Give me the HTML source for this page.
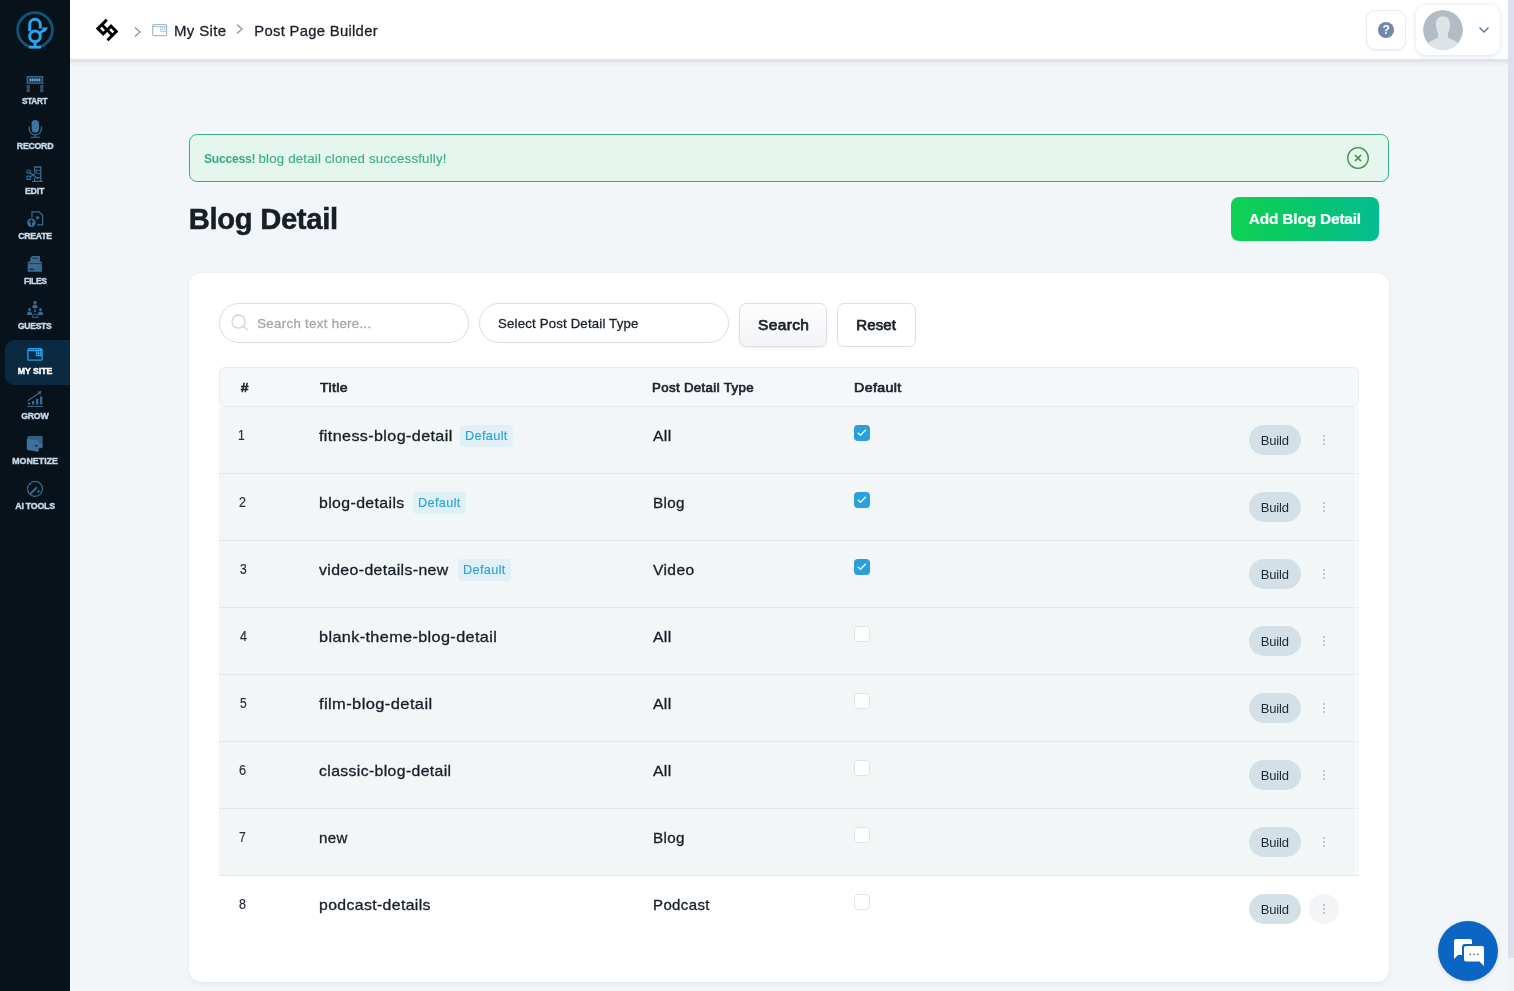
<!DOCTYPE html>
<html lang="en">
<head>
<meta charset="utf-8">
<title>Post Page Builder</title>
<style>
*{box-sizing:border-box;margin:0;padding:0}
html,body{width:1514px;height:991px;overflow:hidden}
body{position:relative;background:#f2f6f9;font-family:"Liberation Sans",sans-serif;color:#141c24}
#wrap{position:absolute;left:0;top:0;width:1514px;height:991px;will-change:transform}
.t{position:absolute;white-space:nowrap;line-height:1;transform-origin:0 0}
svg{display:block;overflow:visible}
/* sidebar */
#side{position:absolute;left:0;top:0;width:70px;height:991px;background:#07121b}
.nav{position:absolute;left:0;width:70px;height:45px}
.nav svg{position:absolute;left:25px;top:4px;width:20px;height:20px}
.navbg{position:absolute;left:5px;width:65px;height:45px;margin-top:30px;background:#0b2a42;border-radius:9px 0 0 9px}
/* topbar */
#top{position:absolute;left:70px;top:0;width:1444px;height:59px;background:linear-gradient(#fff 0,#fff 57px,#fcfdfe 57px,#fcfdfe 59px)}
#topsh{position:absolute;left:70px;top:59px;width:1444px;height:8px;background:linear-gradient(#dfe4e8 0,#dfe4e8 2px,#e5e9ed 3px,#eaeef1 4px,#edf1f4 5px,#eff3f6 6px,#f1f5f8 7px,#f2f6f9 8px)}
#top .in{position:absolute;left:-70px;top:0;width:1514px;height:58px}
/* scrollbar */
#sbt{position:absolute;left:1508px;top:0;width:6px;height:991px;background:#f0f2f8}
#sb{position:absolute;left:1508px;top:0;width:6px;height:958px;background:#dcdfee}
/* alert */
#alert{position:absolute;left:189px;top:134px;width:1200px;height:48px;border:1px solid #3aae8a;border-radius:8px;background:#e5f6ef}
#addbtn{position:absolute;left:1231px;top:197px;width:148px;height:44px;border-radius:8px;background:linear-gradient(90deg,#0fd252 0%,#08c66c 50%,#05bc92 100%)}
#card{position:absolute;left:189px;top:273px;width:1200px;height:709px;background:#fff;border-radius:12px;box-shadow:0 2px 4px rgba(90,100,115,.09),0 0 2px rgba(90,100,115,.08)}
.pill{position:absolute;height:40px;border:1px solid #dadde1;border-radius:20px;background:#fff}
.btn{position:absolute;height:44px;border:1px solid #dcdfe3;border-radius:7px;background:#fff}
#thead{position:absolute;left:219px;top:367px;width:1140px;height:40px;border:1px solid #e6ebee;border-radius:6px;background:#f5f8fa}
.row{position:absolute;left:219px;width:1140px;height:67px;background:#f3f6f7;border-bottom:1px solid #e2e7ea}
.row.last{background:#fff;border-bottom:none}
.badge{position:absolute;width:53px;height:22px;border-radius:4px;background:#e0f0f7}
.cb{position:absolute;width:16px;height:16px;border-radius:4px}
.cb.on{background:#2a9fdb}
.cb.off{background:#fff;border:1px solid #dfe3e7}
.build{position:absolute;width:52px;height:30px;border-radius:15px;background:#d3e0e7}
.dotbg{position:absolute;width:30px;height:30px;border-radius:15px;background:#f3f4f5}
.dots{position:absolute;width:2px;height:10px}
.dots i{position:absolute;left:0;width:2px;height:2px;border-radius:1px;background:#b0b7be}
#strip{position:absolute;left:1353px;top:407px;width:6px;height:468px;background:rgba(255,255,255,.3);border-left:1px solid rgba(228,232,236,.45)}
</style>
</head>
<body>
<div id="wrap">
<div id="side">
<svg style="position:absolute;left:15px;top:10px;width:40px;height:40px" viewBox="0 0 40 40"><circle cx="20" cy="20" r="17.4" fill="none" stroke="#0f5577" stroke-width="2.8"/><path d="M14.7 21.3V14.5a5.3 5.3 0 0 1 10.6 0V18.4" fill="none" stroke="#2ba6ee" stroke-width="3"/><circle cx="20" cy="26.4" r="5.3" fill="none" stroke="#2ba6ee" stroke-width="3"/><path d="M24.6 23.4L30.8 18.6" fill="none" stroke="#2ba6ee" stroke-width="2.8"/><path d="M26.8 17.4h6.2l-3.2 4.8z" fill="#2ba6ee"/><path d="M20 31.5V37" stroke="#2ba6ee" stroke-width="2.8" fill="none"/><path d="M13.9 37.2H26" stroke="#2ba6ee" stroke-width="2.6" fill="none"/></svg>
<div class="nav" style="top:70px"><svg viewBox="0 0 20 20"><rect x="2.3" y="2.6" width="15.4" height="6.6" fill="#15364d" stroke="#3a6a8d" stroke-width="1.2"/><rect x="4.6" y="4.6" width="10.8" height="2.6" fill="#86abc6"/><path d="M6.6 4.4v3M8.8 4.4v3M11.1 4.4v3M13.3 4.4v3" stroke="#15364d" stroke-width=".7"/><rect x="1.7" y="11.2" width="3.1" height="6.7" fill="#3a6a8d"/><rect x="15.2" y="11.2" width="3.1" height="6.7" fill="#3a6a8d"/><path d="M1.5 12.9h17M1.5 14.6h17M1.5 16.3h17" stroke="#07121b" stroke-width=".5"/></svg></div>
<span class="t" style="left:21.95px;top:96.95px;font-size:8.8px;color:#c5d8e8;font-weight:700;letter-spacing:-0.30px;transform:scaleX(0.9323);-webkit-text-stroke:0.4px #c5d8e8;">START</span>
<div class="nav" style="top:115px"><svg viewBox="0 0 20 20"><rect x="6.6" y="1" width="7.4" height="12.6" rx="3.7" fill="#3b76a3"/><path d="M4.2 7.6v2.2a6.1 6.1 0 0 0 12.2 0V7.6" fill="none" stroke="#3a6a8d" stroke-width="1.3"/><path d="M10.3 16v2.2" stroke="#3a6a8d" stroke-width="1.3" fill="none"/><path d="M5.6 18.3h9.4" stroke="#3a6a8d" stroke-width="1.1" fill="none"/></svg></div>
<span class="t" style="left:16.83px;top:141.95px;font-size:8.8px;color:#c5d8e8;font-weight:700;letter-spacing:-0.28px;-webkit-text-stroke:0.4px #c5d8e8;">RECORD</span>
<div class="nav" style="top:160px"><svg viewBox="0 0 20 20"><path d="M8.8 3h7v14.4" fill="none" stroke="#3a6a8d" stroke-width="1.3"/><path d="M9.6 3v5M9.6 14v3.4h6.2M7 17.4h10.8" fill="none" stroke="#3a6a8d" stroke-width="1.2"/><path d="M10 6.2h5.5M12 9.8h3.8M10 13.6h5.8" stroke="#3a6a8d" stroke-width="1"/><circle cx="3.7" cy="7.7" r="1.7" fill="none" stroke="#3a6a8d" stroke-width="1.2"/><rect x="2.1" y="12.2" width="3.2" height="3.2" fill="none" stroke="#3a6a8d" stroke-width="1.2"/><path d="M5 8.8l8.5 6.2M5.3 13l7-5.5" stroke="#3a6a8d" stroke-width="1.2"/></svg></div>
<span class="t" style="left:24.93px;top:186.95px;font-size:8.8px;color:#c5d8e8;font-weight:700;letter-spacing:-0.19px;-webkit-text-stroke:0.4px #c5d8e8;">EDIT</span>
<div class="nav" style="top:205px"><svg viewBox="0 0 20 20"><path d="M7 8.5V2.9h7.2l3.4 3.4v9.5h-5.5" fill="none" stroke="#3a6a8d" stroke-width="1.3"/><path d="M11.4 6.6l3.8 2.2-3.8 2.2z" fill="#3a6a8d"/><circle cx="6.4" cy="13.7" r="4.2" fill="#3b6f98"/><path d="M6.4 16.4v-4.8M4.5 13.3l1.9-2 1.9 2" stroke="#07121b" stroke-width="1.2" fill="none"/></svg></div>
<span class="t" style="left:18.15px;top:231.95px;font-size:8.8px;color:#c5d8e8;font-weight:700;letter-spacing:-0.29px;-webkit-text-stroke:0.4px #c5d8e8;">CREATE</span>
<div class="nav" style="top:250px"><svg viewBox="0 0 20 20"><path d="M5.2 4l2-2.1h7.8V9H5.2z" fill="#3a6a8d"/><path d="M6.8 4.2h6.6" stroke="#07121b" stroke-width=".8" opacity=".7"/><rect x="2.7" y="7.5" width="14.2" height="10.3" fill="#3a6b8e"/><path d="M2.7 9.6h14.2" stroke="#07121b" stroke-width=".8" opacity=".6"/><rect x="4.5" y="14.7" width="4.2" height="1.4" fill="#07121b" opacity=".75"/></svg></div>
<span class="t" style="left:23.65px;top:276.95px;font-size:8.8px;color:#c5d8e8;font-weight:700;letter-spacing:-0.30px;transform:scaleX(0.9683);-webkit-text-stroke:0.4px #c5d8e8;">FILES</span>
<div class="nav" style="top:295px"><svg viewBox="0 0 20 20"><circle cx="10" cy="3.4" r="1.7" fill="#3a6a8d"/><path d="M7.3 8.9c0-2.3 1.1-3.4 2.7-3.4s2.7 1.1 2.7 3.4z" fill="#3a6a8d"/><circle cx="4.5" cy="10.6" r="1.5" fill="#3a6a8d"/><path d="M1.8 16c0-2.3 1.1-3.4 2.7-3.4s2.7 1.1 2.7 3.4z" fill="#3a6a8d"/><circle cx="15.5" cy="10.6" r="1.5" fill="#3a6a8d"/><path d="M12.8 16c0-2.3 1.1-3.4 2.7-3.4s2.7 1.1 2.7 3.4z" fill="#3a6a8d"/><circle cx="10" cy="12.3" r="1.1" fill="#3a6a8d"/><path d="M7.3 18.3c0-2.2 1.1-3.2 2.7-3.2s2.7 1 2.7 3.2z" fill="none" stroke="#3a6a8d" stroke-width="1"/><path d="M10 9v2" stroke="#3a6a8d" stroke-width=".9"/></svg></div>
<span class="t" style="left:18.16px;top:321.95px;font-size:8.8px;color:#c5d8e8;font-weight:700;letter-spacing:-0.30px;transform:scaleX(0.9733);-webkit-text-stroke:0.4px #c5d8e8;">GUESTS</span>
<div class="navbg" style="top:310.2px"></div>
<div class="nav" style="top:340px"><svg viewBox="0 0 20 20"><rect x="2.9" y="4.7" width="14.2" height="11.4" rx="1.2" fill="none" stroke="#1f9be8" stroke-width="1.4"/><path d="M2.9 6.7h8.5v5h5.7" stroke="#1f9be8" stroke-width="1.2" fill="none"/><path d="M11.4 6.6h5.7M11.4 9.1h5.7M13.3 4.7v7M15.3 4.7v7" stroke="#3ab4f2" stroke-width=".9" fill="none"/><path d="M4.8 4.2v1.8M6.6 4.2v1.8M8.4 4.2v1.8M10.2 4.2v1.8" stroke="#1f9be8" stroke-width=".8"/></svg></div>
<span class="t" style="left:17.73px;top:366.95px;font-size:8.8px;color:#ffffff;font-weight:700;letter-spacing:-0.07px;-webkit-text-stroke:0.4px #ffffff;">MY SITE</span>
<div class="nav" style="top:385px"><svg viewBox="0 0 20 20"><rect x="3" y="13.6" width="2.3" height="1.9" fill="#3a6a8d"/><rect x="7" y="12" width="2.3" height="3.5" fill="#3a6a8d"/><rect x="11" y="9.8" width="2.3" height="5.7" fill="#3a6a8d"/><rect x="15" y="7.4" width="2.3" height="8.1" fill="#3a6a8d"/><path d="M2.3 17.4h15.6" stroke="#3a6a8d" stroke-width="1.1"/><path d="M2.7 11.8L15 3.5" stroke="#3a6a8d" stroke-width="1.1"/><path d="M12.6 2.6l4-.5-1.4 3.8z" fill="#3a6a8d"/></svg></div>
<span class="t" style="left:21.15px;top:411.95px;font-size:8.8px;color:#c5d8e8;font-weight:700;letter-spacing:-0.24px;-webkit-text-stroke:0.4px #c5d8e8;">GROW</span>
<div class="nav" style="top:430px"><svg viewBox="0 0 20 20"><path d="M2.6 3.2c0-.7.5-1.2 1.2-1.2h12.7c.7 0 1.2.5 1.2 1.2V13c0 .7-.5 1.2-1.2 1.2H2.6z" fill="#335f80"/><path d="M1.8 4.6l10.6 2c.8.2 1.3.8 1.3 1.6v8.4c0 .8-.7 1.4-1.5 1.2L3 16c-.7-.2-1.2-.8-1.2-1.5z" fill="#3d719a"/><path d="M13.7 9.3h3.2v4.2h-3.2" fill="#3d719a"/><circle cx="11.3" cy="11.7" r="1" fill="#07121b"/></svg></div>
<span class="t" style="left:12.13px;top:456.95px;font-size:8.8px;color:#c5d8e8;font-weight:700;letter-spacing:0.05px;-webkit-text-stroke:0.4px #c5d8e8;">MONETIZE</span>
<div class="nav" style="top:475px"><svg viewBox="0 0 20 20"><circle cx="10" cy="9.8" r="7.5" fill="none" stroke="#3a6a8d" stroke-width="1.2"/><path d="M5 1.4l.9 2.7 2.7.9-2.7.9L5 8.6l-.9-2.7-2.7-.9 2.7-.9z" fill="#3a6a8d" stroke="#07121b" stroke-width="1"/><path d="M6 14.2l5.3-5.3" stroke="#3a6a8d" stroke-width="2" stroke-linecap="round"/><path d="M13.6 10.3l.6 1.5 1.5.6-1.5.6-.6 1.5-.6-1.5-1.5-.6 1.5-.6z" fill="#3a6a8d"/></svg></div>
<span class="t" style="left:15.28px;top:501.95px;font-size:8.8px;color:#c5d8e8;font-weight:700;letter-spacing:-0.22px;-webkit-text-stroke:0.4px #c5d8e8;">AI TOOLS</span>
</div>
<div id="topsh"></div>
<div id="top"><div class="in">
<svg style="position:absolute;left:95px;top:18px;width:24px;height:24px" viewBox="-12 -12 24 24"><g transform="translate(0.1,0) rotate(-45)" fill="#000"><path fill-rule="evenodd" d="M-7 -9H7V-6H1.5V-1.5H7V9H-7V6H-1.5V1.5H-7ZM-4 -6V-1.5H-1.5V-6ZM1.5 1.5V6H4V1.5Z"/></g></svg>
<svg style="position:absolute;left:133px;top:26px;width:9px;height:12px" viewBox="0 0 9 12"><path d="M2 1.5L7 6 2 10.5" fill="none" stroke="#9b9b9b" stroke-width="1.5"/></svg>
<svg style="position:absolute;left:152.3px;top:24px;width:15.3px;height:12.4px" viewBox="0 0 16 13"><rect x=".7" y=".7" width="14.6" height="11.6" rx="1.2" fill="#fff" stroke="#a9bccb" stroke-width="1.3"/><path d="M.7 2.8h14.6" stroke="#a9bccb" stroke-width="1"/><path d="M9 2.8v5h6.3" stroke="#a8cdea" stroke-width="1" fill="none"/><path d="M11.2 2.8v5M13.3 2.8v5M9 5.3h6.3" stroke="#b9d8ef" stroke-width=".9" fill="none"/></svg>
<span class="t" style="left:174.10px;top:23.57px;font-size:14.8px;color:#1a222b;letter-spacing:0.35px;transform:scaleX(1.0139);-webkit-text-stroke:0.3px #1a222b;">My Site</span>
<svg style="position:absolute;left:235px;top:22.5px;width:9px;height:12px" viewBox="0 0 9 12"><path d="M2 1.5L7 6 2 10.5" fill="none" stroke="#9b9b9b" stroke-width="1.5"/></svg>
<span class="t" style="left:254.22px;top:23.57px;font-size:14.8px;color:#1a222b;letter-spacing:0.31px;-webkit-text-stroke:0.3px #1a222b;">Post Page Builder</span>
<div style="position:absolute;left:1366px;top:10px;width:40px;height:40px;border:1px solid #e7eaef;border-radius:9px;background:#fff;box-shadow:0 1px 2px rgba(150,160,175,.15)"></div><div style="position:absolute;left:1378px;top:22px;width:16px;height:16px;border-radius:8px;background:#7188a8"></div><span class="t" style="left:1382.6px;top:24.3px;font-size:12px;font-weight:700;color:#fff">?</span>
<div style="position:absolute;left:1416px;top:5px;width:84px;height:50px;border-radius:10px;background:#fff;box-shadow:0 1px 5px rgba(140,150,170,.30)"></div><svg style="position:absolute;left:1423px;top:10px;width:40px;height:40px;border-radius:20px;overflow:hidden" viewBox="0 0 40 40"><circle cx="20" cy="20" r="20" fill="#b3bbc4"/><g fill="#dde3e7"><path d="M13 14.5c0-5.5 2.8-8 7-8s7 2.5 7 8c0 3-.5 6-2 8.5v4.5l9 4.5v8H6v-8l9-4.5v-4.5c-1.5-2.5-2-5.5-2-8.5z"/></g></svg><svg style="position:absolute;left:1478px;top:26px;width:12px;height:8px" viewBox="0 0 12 8"><path d="M1.5 1.5L6 6l4.5-4.5" fill="none" stroke="#5f7c94" stroke-width="1.5"/></svg>
</div></div>
<div id="alert"></div>
<span class="t" style="left:204.44px;top:152.33px;font-size:13.2px;color:#35ab82;font-weight:700;letter-spacing:-0.30px;transform:scaleX(0.9214);">Success!</span>
<span class="t" style="left:258.54px;top:152.33px;font-size:13.2px;color:#3cae86;letter-spacing:0.22px;-webkit-text-stroke:0.15px #3cae86;">blog detail cloned successfully!</span>
<svg style="position:absolute;left:1346px;top:146px;width:24px;height:24px" viewBox="0 0 24 24"><circle cx="12" cy="12" r="10.3" fill="none" stroke="#3f8f45" stroke-width="1.3"/><path d="M9 9l6 6M15 9l-6 6" stroke="#3f8f45" stroke-width="1.7"/></svg>
<span class="t" style="left:188.70px;top:205.28px;font-size:29.2px;color:#171e26;font-weight:700;letter-spacing:-0.30px;-webkit-text-stroke:0.5px #171e26;">Blog Detail</span>
<div id="addbtn"></div>
<span class="t" style="left:1248.82px;top:210.96px;font-size:15.4px;color:#ffffff;font-weight:700;letter-spacing:-0.16px;-webkit-text-stroke:0.2px #ffffff;">Add Blog Detail</span>
<div id="card"></div>
<div class="pill" style="left:219px;top:303px;width:250px"></div>
<svg style="position:absolute;left:231px;top:314.2px;width:18px;height:17px" viewBox="0 0 18 17"><circle cx="7.6" cy="7.6" r="6.6" fill="none" stroke="#d0d3d7" stroke-width="1.3"/><path d="M12.3 12.3l4.4 3.8" stroke="#d0d3d7" stroke-width="1.4"/></svg>
<span class="t" style="left:257.20px;top:316.93px;font-size:13.2px;color:#a2a7ac;letter-spacing:0.35px;-webkit-text-stroke:0.3px #a2a7ac;">Search text here...</span>
<div class="pill" style="left:479px;top:303px;width:250px"></div>
<span class="t" style="left:498.01px;top:317.03px;font-size:13.2px;color:#1a222b;letter-spacing:0.19px;-webkit-text-stroke:0.3px #1a222b;">Select Post Detail Type</span>
<div class="btn" style="left:739px;top:303px;width:88px;background:linear-gradient(#fdfdfe,#f2f4f6);box-shadow:0 1px 2px rgba(120,130,140,.14)"></div>
<span class="t" style="left:757.90px;top:317.20px;font-size:15px;color:#1a222b;letter-spacing:0.35px;transform:scaleX(1.0321);-webkit-text-stroke:0.75px #1a222b;">Search</span>
<div class="btn" style="left:837px;top:303px;width:79px"></div>
<span class="t" style="left:856.30px;top:317.20px;font-size:15px;color:#1a222b;letter-spacing:0.13px;-webkit-text-stroke:0.75px #1a222b;">Reset</span>
<div id="thead"></div>
<span class="t" style="left:240.99px;top:380.73px;font-size:13.2px;color:#1a222b;-webkit-text-stroke:0.68px #1a222b;">#</span>
<span class="t" style="left:320.32px;top:380.73px;font-size:13.2px;color:#1a222b;letter-spacing:0.35px;transform:scaleX(1.0616);-webkit-text-stroke:0.68px #1a222b;">Title</span>
<span class="t" style="left:652.24px;top:380.73px;font-size:13.2px;color:#1a222b;letter-spacing:0.35px;transform:scaleX(1.0047);-webkit-text-stroke:0.68px #1a222b;">Post Detail Type</span>
<span class="t" style="left:853.76px;top:380.73px;font-size:13.2px;color:#1a222b;letter-spacing:0.35px;transform:scaleX(1.0782);-webkit-text-stroke:0.68px #1a222b;">Default</span>
<div class="row" style="top:407px"></div>
<span class="t" style="left:237.92px;top:427.88px;font-size:14.2px;color:#27313b;transform:scaleX(0.8500);-webkit-text-stroke:0.2px #27313b;">1</span>
<span class="t" style="left:319.16px;top:428.63px;font-size:14.5px;color:#161e27;letter-spacing:0.35px;transform:scaleX(1.1108);-webkit-text-stroke:0.3px #161e27;">fitness-blog-detail</span>
<div class="badge" style="left:460.4px;top:425.4px"></div>
<span class="t" style="left:465.38px;top:430.33px;font-size:12.6px;color:#2ba2d6;letter-spacing:0.35px;transform:scaleX(1.0096);-webkit-text-stroke:0.15px #2ba2d6;">Default</span>
<div class="cb on" style="left:854px;top:425.0px"><svg style="position:absolute;left:0;top:0;width:16px;height:16px" viewBox="0 0 16 16"><path d="M3.8 7.7l2.7 2.6 5.3-5.6" fill="none" stroke="#e4f7ff" stroke-width="1.5"/></svg></div>
<span class="t" style="left:653.00px;top:428.63px;font-size:14.5px;color:#161e27;letter-spacing:0.35px;transform:scaleX(1.0850);-webkit-text-stroke:0.3px #161e27;">All</span>
<div class="build" style="left:1249px;top:424.7px"></div>
<span class="t" style="left:1260.66px;top:434.20px;font-size:13px;color:#1f2a33;letter-spacing:-0.16px;">Build</span>
<div class="dots" style="left:1323px;top:435.2px"><i style="top:0"></i><i style="top:4px"></i><i style="top:8px"></i></div>
<div class="row" style="top:474px"></div>
<span class="t" style="left:239.37px;top:494.88px;font-size:14.2px;color:#27313b;transform:scaleX(0.8822);-webkit-text-stroke:0.2px #27313b;">2</span>
<span class="t" style="left:319.07px;top:495.63px;font-size:14.5px;color:#161e27;letter-spacing:0.35px;transform:scaleX(1.0932);-webkit-text-stroke:0.3px #161e27;">blog-details</span>
<div class="badge" style="left:412.9px;top:492.4px"></div>
<span class="t" style="left:417.88px;top:497.33px;font-size:12.6px;color:#2ba2d6;letter-spacing:0.35px;transform:scaleX(1.0096);-webkit-text-stroke:0.15px #2ba2d6;">Default</span>
<div class="cb on" style="left:854px;top:492.0px"><svg style="position:absolute;left:0;top:0;width:16px;height:16px" viewBox="0 0 16 16"><path d="M3.8 7.7l2.7 2.6 5.3-5.6" fill="none" stroke="#e4f7ff" stroke-width="1.5"/></svg></div>
<span class="t" style="left:652.78px;top:495.63px;font-size:14.5px;color:#161e27;letter-spacing:0.35px;transform:scaleX(1.0484);-webkit-text-stroke:0.3px #161e27;">Blog</span>
<div class="build" style="left:1249px;top:491.7px"></div>
<span class="t" style="left:1260.66px;top:501.20px;font-size:13px;color:#1f2a33;letter-spacing:-0.16px;">Build</span>
<div class="dots" style="left:1323px;top:502.2px"><i style="top:0"></i><i style="top:4px"></i><i style="top:8px"></i></div>
<div class="row" style="top:541px"></div>
<span class="t" style="left:239.50px;top:561.88px;font-size:14.2px;color:#27313b;transform:scaleX(0.8500);-webkit-text-stroke:0.2px #27313b;">3</span>
<span class="t" style="left:319.32px;top:562.63px;font-size:14.5px;color:#161e27;letter-spacing:0.35px;transform:scaleX(1.0911);-webkit-text-stroke:0.3px #161e27;">video-details-new</span>
<div class="badge" style="left:457.7px;top:559.4px"></div>
<span class="t" style="left:462.68px;top:564.33px;font-size:12.6px;color:#2ba2d6;letter-spacing:0.35px;transform:scaleX(1.0096);-webkit-text-stroke:0.15px #2ba2d6;">Default</span>
<div class="cb on" style="left:854px;top:559.0px"><svg style="position:absolute;left:0;top:0;width:16px;height:16px" viewBox="0 0 16 16"><path d="M3.8 7.7l2.7 2.6 5.3-5.6" fill="none" stroke="#e4f7ff" stroke-width="1.5"/></svg></div>
<span class="t" style="left:652.92px;top:562.63px;font-size:14.5px;color:#161e27;letter-spacing:0.35px;transform:scaleX(1.0751);-webkit-text-stroke:0.3px #161e27;">Video</span>
<div class="build" style="left:1249px;top:558.7px"></div>
<span class="t" style="left:1260.66px;top:568.20px;font-size:13px;color:#1f2a33;letter-spacing:-0.16px;">Build</span>
<div class="dots" style="left:1323px;top:569.2px"><i style="top:0"></i><i style="top:4px"></i><i style="top:8px"></i></div>
<div class="row" style="top:608px"></div>
<span class="t" style="left:239.75px;top:628.88px;font-size:14.2px;color:#27313b;transform:scaleX(0.8785);-webkit-text-stroke:0.2px #27313b;">4</span>
<span class="t" style="left:319.05px;top:629.63px;font-size:14.5px;color:#161e27;letter-spacing:0.35px;transform:scaleX(1.1167);-webkit-text-stroke:0.3px #161e27;">blank-theme-blog-detail</span>
<div class="cb off" style="left:854px;top:626.0px"></div>
<span class="t" style="left:653.00px;top:629.63px;font-size:14.5px;color:#161e27;letter-spacing:0.35px;transform:scaleX(1.0850);-webkit-text-stroke:0.3px #161e27;">All</span>
<div class="build" style="left:1249px;top:625.7px"></div>
<span class="t" style="left:1260.66px;top:635.20px;font-size:13px;color:#1f2a33;letter-spacing:-0.16px;">Build</span>
<div class="dots" style="left:1323px;top:636.2px"><i style="top:0"></i><i style="top:4px"></i><i style="top:8px"></i></div>
<div class="row" style="top:675px"></div>
<span class="t" style="left:239.50px;top:695.88px;font-size:14.2px;color:#27313b;transform:scaleX(0.8500);-webkit-text-stroke:0.2px #27313b;">5</span>
<span class="t" style="left:319.15px;top:696.63px;font-size:14.5px;color:#161e27;letter-spacing:0.35px;transform:scaleX(1.1369);-webkit-text-stroke:0.3px #161e27;">film-blog-detail</span>
<div class="cb off" style="left:854px;top:693.0px"></div>
<span class="t" style="left:653.00px;top:696.63px;font-size:14.5px;color:#161e27;letter-spacing:0.35px;transform:scaleX(1.0850);-webkit-text-stroke:0.3px #161e27;">All</span>
<div class="build" style="left:1249px;top:692.7px"></div>
<span class="t" style="left:1260.66px;top:702.20px;font-size:13px;color:#1f2a33;letter-spacing:-0.16px;">Build</span>
<div class="dots" style="left:1323px;top:703.2px"><i style="top:0"></i><i style="top:4px"></i><i style="top:8px"></i></div>
<div class="row" style="top:742px"></div>
<span class="t" style="left:239.37px;top:762.88px;font-size:14.2px;color:#27313b;transform:scaleX(0.8935);-webkit-text-stroke:0.2px #27313b;">6</span>
<span class="t" style="left:319.07px;top:763.63px;font-size:14.5px;color:#161e27;letter-spacing:0.35px;transform:scaleX(1.0868);-webkit-text-stroke:0.3px #161e27;">classic-blog-detail</span>
<div class="cb off" style="left:854px;top:760.0px"></div>
<span class="t" style="left:653.00px;top:763.63px;font-size:14.5px;color:#161e27;letter-spacing:0.35px;transform:scaleX(1.0850);-webkit-text-stroke:0.3px #161e27;">All</span>
<div class="build" style="left:1249px;top:759.7px"></div>
<span class="t" style="left:1260.66px;top:769.20px;font-size:13px;color:#1f2a33;letter-spacing:-0.16px;">Build</span>
<div class="dots" style="left:1323px;top:770.2px"><i style="top:0"></i><i style="top:4px"></i><i style="top:8px"></i></div>
<div class="row" style="top:809px"></div>
<span class="t" style="left:239.40px;top:829.88px;font-size:14.2px;color:#27313b;transform:scaleX(0.8513);-webkit-text-stroke:0.2px #27313b;">7</span>
<span class="t" style="left:319.12px;top:830.63px;font-size:14.5px;color:#161e27;letter-spacing:0.35px;transform:scaleX(1.0393);-webkit-text-stroke:0.3px #161e27;">new</span>
<div class="cb off" style="left:854px;top:827.0px"></div>
<span class="t" style="left:652.78px;top:830.63px;font-size:14.5px;color:#161e27;letter-spacing:0.35px;transform:scaleX(1.0484);-webkit-text-stroke:0.3px #161e27;">Blog</span>
<div class="build" style="left:1249px;top:826.7px"></div>
<span class="t" style="left:1260.66px;top:836.20px;font-size:13px;color:#1f2a33;letter-spacing:-0.16px;">Build</span>
<div class="dots" style="left:1323px;top:837.2px"><i style="top:0"></i><i style="top:4px"></i><i style="top:8px"></i></div>
<div class="row last" style="top:876px"></div>
<span class="t" style="left:239.44px;top:896.88px;font-size:14.2px;color:#27313b;transform:scaleX(0.8840);-webkit-text-stroke:0.2px #27313b;">8</span>
<span class="t" style="left:319.07px;top:897.63px;font-size:14.5px;color:#161e27;letter-spacing:0.35px;transform:scaleX(1.0885);-webkit-text-stroke:0.3px #161e27;">podcast-details</span>
<div class="cb off" style="left:854px;top:894.0px"></div>
<span class="t" style="left:652.80px;top:897.63px;font-size:14.5px;color:#161e27;letter-spacing:0.35px;transform:scaleX(1.0355);-webkit-text-stroke:0.3px #161e27;">Podcast</span>
<div class="build" style="left:1249px;top:893.7px"></div>
<span class="t" style="left:1260.66px;top:903.20px;font-size:13px;color:#1f2a33;letter-spacing:-0.16px;">Build</span>
<div class="dotbg" style="left:1309px;top:893.7px"></div>
<div class="dots" style="left:1323px;top:904.2px"><i style="top:0"></i><i style="top:4px"></i><i style="top:8px"></i></div>
<div id="strip"></div>
<div style="position:absolute;left:1438px;top:921px;width:60px;height:60px;border-radius:30px;background:#0b66c3;box-shadow:0 1px 4px rgba(0,0,0,.12)"></div><svg style="position:absolute;left:1452px;top:938.4px;width:34px;height:30px" viewBox="0 0 34 30"><path d="M2 3a2 2 0 0 1 2-2h14a2 2 0 0 1 2 2v3H13a3 3 0 0 0-3 3v8H6l-4 4z" fill="#fff"/><path d="M12 10a2 2 0 0 1 2-2h16a2 2 0 0 1 2 2v18l-4.5-4.5H14a2 2 0 0 1-2-2z" fill="#fff"/><circle cx="18.3" cy="16.2" r=".75" fill="#2a3f5c"/><circle cx="22" cy="16.2" r=".75" fill="#2a3f5c"/><circle cx="25.7" cy="16.2" r=".75" fill="#2a3f5c"/></svg>
<div id="sbt"></div><div id="sb"></div>
</div>
</body>
</html>
